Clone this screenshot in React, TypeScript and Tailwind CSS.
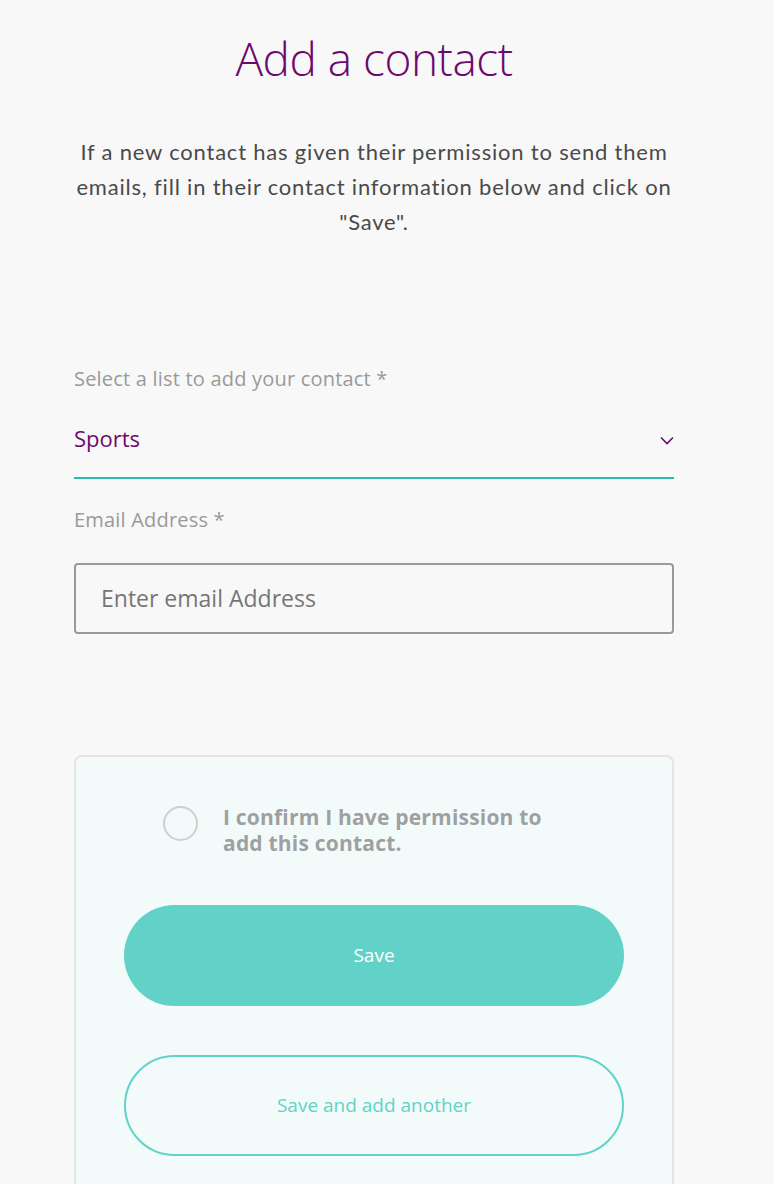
import React from "react";

export default function App() {
  return (
    <div className="min-h-[1184px] w-full bg-[#f8f8f8] overflow-hidden" style={{ fontFamily: "'Open Sans', 'Noto Sans', sans-serif" }}>
      <div className="ml-[74px] w-[600px] flex flex-col">
        <h1 className="mt-[28px] text-center text-[46px] leading-[60px] font-light text-[#6b0a6e] tracking-[-0.5px]">
          Add a contact
        </h1>
        <p className="mt-[46px] text-center text-[22px] leading-[35px] tracking-[0.8px] text-[#4a4a4a] font-['Lato',sans-serif] -mx-[20px]">
          If a new contact has given their permission to send them
          <br />
          emails, fill in their contact information below and click on
          <br />
          "Save".
        </p>

        <label className="mt-[128px] text-[20px] leading-[24px] tracking-[0.2px] text-[#9a9a9a]">
          Select a list to add your contact *
        </label>
        <div className="mt-[33px] flex items-center justify-between border-b-2 border-[#2bbbad] pb-[25px]">
          <span className="text-[22px] leading-[28px] text-[#6b0a6e]">Sports</span>
          <svg width="14" height="9" viewBox="0 0 14 9" className="mt-[4px]">
            <path d="M1 1.5 L7 7.5 L13 1.5" fill="none" stroke="#6b0a6e" strokeWidth="1.6" />
          </svg>
        </div>

        <label className="mt-[29px] text-[20px] leading-[24px] tracking-[0.2px] text-[#9a9a9a]">Email Address *</label>
        <div className="mt-[31px] h-[71px] rounded-[4px] border-2 border-[#9a9a9a] flex items-center px-[25px]">
          <span className="text-[23px] text-[#767676]">Enter email Address</span>
        </div>

        <div className="mt-[121px] rounded-t-[8px] border-2 border-b-0 border-[#e4e4e4] bg-[#f3fbfa] h-[440px] flex flex-col items-center">
          <div className="mt-[47px] flex items-start w-[400px] ml-[-22px]">
            <div className="w-[35px] h-[35px] rounded-full border-2 border-[#cfcfcf] mt-[2px] shrink-0" />
            <div className="ml-[25px] text-[21px] leading-[26px] font-bold tracking-[0.2px] text-[#9da1a1]">
              I confirm I have permission to<br />add this contact.
            </div>
          </div>
          <button className="mt-[49px] w-[500px] h-[101px] rounded-full bg-[#62d2c8] text-white text-[19px]">
            Save
          </button>
          <button className="mt-[49px] w-[500px] h-[101px] rounded-full border-2 border-[#62d2c8] text-[#62d2c8] text-[19px]">
            Save and add another
          </button>
        </div>
      </div>
    </div>
  );
}
